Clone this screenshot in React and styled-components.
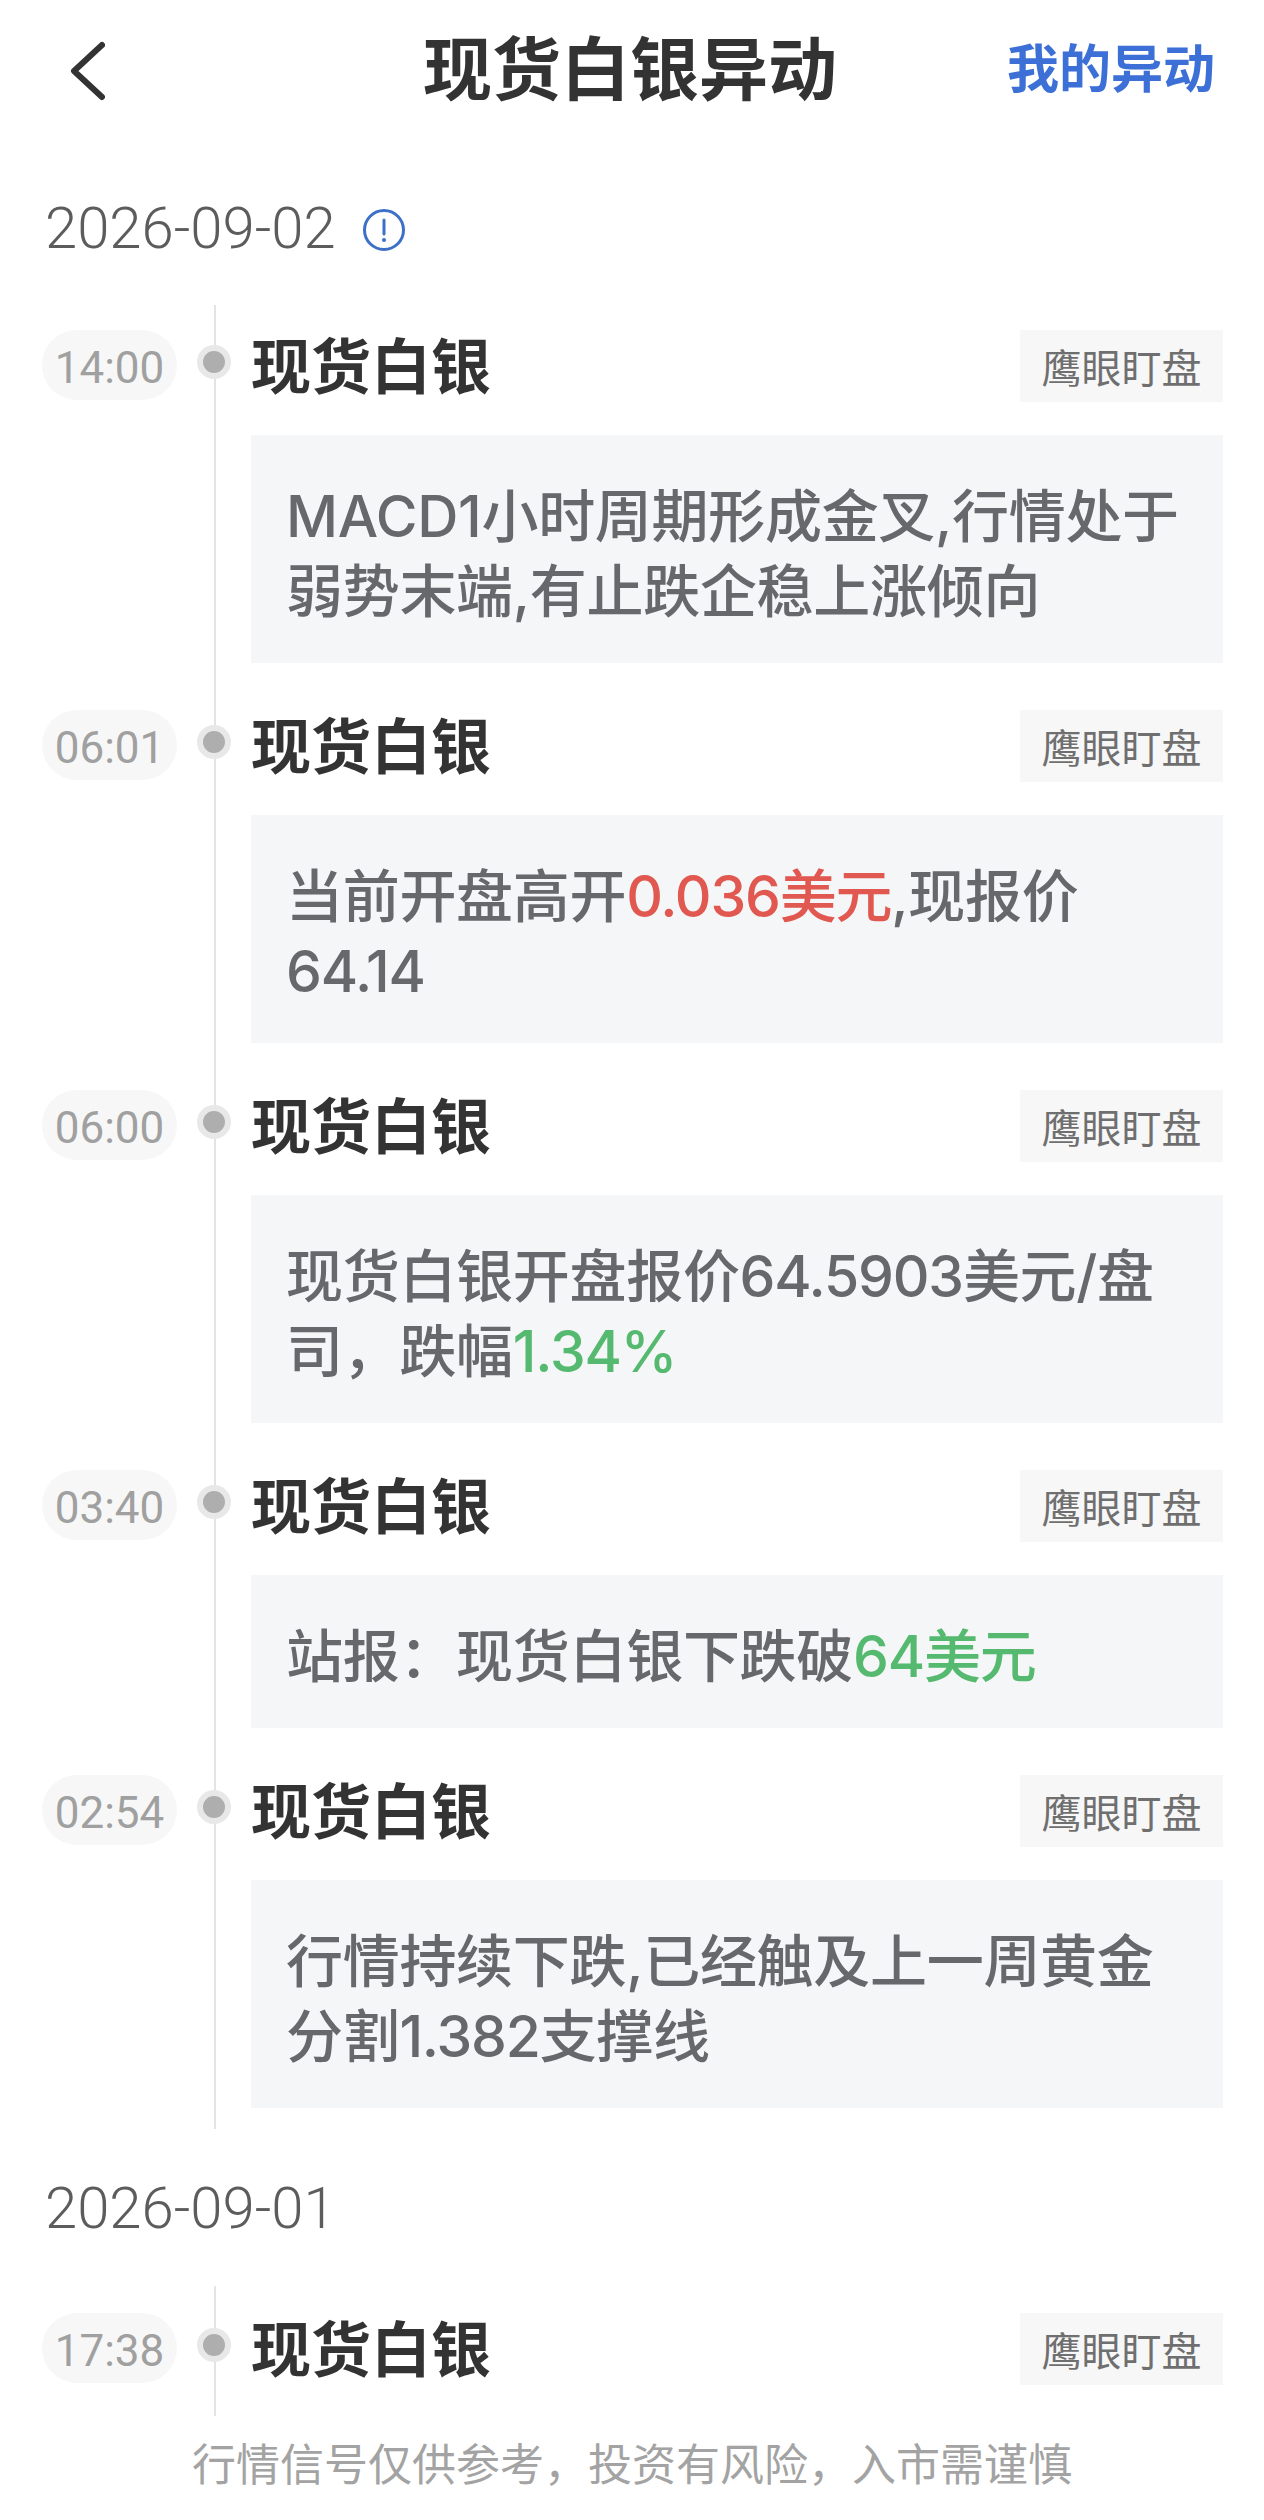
import React from 'react'
import styled, { createGlobalStyle } from 'styled-components'

const GlobalStyle = createGlobalStyle`
  html, body {
    margin: 0;
    padding: 0;
    background: #fff;
  }
  * {
    box-sizing: border-box;
  }
`

const Page = styled.div`
  width: 1264px;
  height: 2520px;
  overflow: hidden;
  display: flex;
  flex-direction: column;
  font-family: "Liberation Sans", "Noto Sans CJK SC", sans-serif;
  background: #fff;
`

const Header = styled.header`
  height: 150px;
  padding: 0 49px 8px 45px;
  display: grid;
  grid-template-columns: 1fr auto 1fr;
  align-items: center;
`

const BackIcon = styled.svg`
  width: 36px;
  height: 60px;
  margin-left: 24px;
  display: block;
`

const Title = styled.h1`
  margin: 0;
  font-size: 69px;
  font-weight: 700;
  color: #333;
  line-height: 1;
`

const MyLink = styled.a`
  justify-self: end;
  font-size: 52px;
  font-weight: 700;
  color: #3d70d6;
  line-height: 1;
  margin-top: -2px;
`

const DateRow = styled.div`
  height: ${(p) => (p.$first ? '155px' : '157px')};
  padding: 1px 0 0 45px;
  display: flex;
  align-items: center;
  gap: 26px;
  flex: none;
`

const DateText = styled.div`
  font-family: Roboto, sans-serif;
  font-size: 58px;
  font-weight: 300;
  color: #5c5c5c;
  line-height: 1;
`

const InfoIcon = styled.svg`
  width: 44px;
  height: 44px;
  margin-top: 4px;
  display: block;
`

const Timeline = styled.div`
  position: relative;
  flex: none;
  padding: ${(p) => p.$pad};
  display: flex;
  flex-direction: column;
  gap: 47px;

  &::before {
    content: "";
    position: absolute;
    left: 214px;
    top: 0;
    bottom: 0;
    width: 2px;
    background: #e4e4e4;
  }
`

const Row = styled.div`
  display: grid;
  grid-template-columns: 135px 74px 1fr;
  padding: 0 41px 0 42px;
`

const TimePill = styled.div`
  height: 70px;
  padding-top: 5px;
  border-radius: 35px;
  background: #f7f7f7;
  color: #a0a0a0;
  font-family: Roboto, sans-serif;
  font-size: 44px;
  display: flex;
  align-items: center;
  justify-content: center;
  align-self: start;
`

const Axis = styled.div`
  display: flex;
  justify-content: center;
  align-items: flex-start;
  padding-top: 15px;
`

const Dot = styled.span`
  position: relative;
  width: 34px;
  height: 34px;
  border-radius: 50%;
  background: #aeaeae;
  border: 6px solid #e8e8e8;
`

const ItemHead = styled.div`
  height: 72px;
  display: flex;
  align-items: center;
  justify-content: space-between;
`

const ItemName = styled.div`
  padding-top: 6px;
  font-size: 60px;
  font-weight: 700;
  color: #333;
  line-height: 1;
`

const Tag = styled.div`
  width: 203px;
  height: 72px;
  background: #f7f7f7;
  color: #6f6f6f;
  font-size: 40px;
  display: flex;
  align-items: center;
  justify-content: center;
`

const Card = styled.div`
  margin-top: 33px;
  padding: 44px 35px 34px;
  background: #f5f6f8;
  color: #66686b;
  font-family: Inter, "Noto Sans CJK SC", sans-serif;
  font-size: 57px;
  font-weight: 500;
  letter-spacing: -0.3px;
  line-height: 75px;
`

const Num = styled.span`
  letter-spacing: -1.2px;
`

const Up = styled(Num)`
  color: #e0584f;
`

const Down = styled(Num)`
  color: #55b96f;
`

const Footer = styled.footer`
  flex: 1;
  display: flex;
  align-items: center;
  justify-content: center;
  padding-bottom: 12px;
  color: #a3a3a3;
  font-size: 44px;
  background: #fff;
`

const items = [
  { time: '14:00', text: 'MACD1小时周期形成金叉,行情处于弱势末端,有止跌企稳上涨倾向' },
  { time: '06:01', text: <>当前开盘高开<Up>0.036美元</Up>,现报价<Num>64.14</Num></> },
  { time: '06:00', text: <>现货白银开盘报价<Num>64.5903</Num>美元/盘司，跌幅<Down>1.34%</Down></> },
  { time: '03:40', text: <>站报：现货白银下跌破<Down>64美元</Down></> },
  { time: '02:54', text: <>行情持续下跌,已经触及上一周黄金分割<Num>1.382</Num>支撑线</> },
]

const Item = ({ time, text }) => (
  <Row>
    <TimePill>{time}</TimePill>
    <Axis><Dot /></Axis>
    <div>
      <ItemHead>
        <ItemName>现货白银</ItemName>
        <Tag>鹰眼盯盘</Tag>
      </ItemHead>
      {text && <Card>{text}</Card>}
    </div>
  </Row>
)

const App = () => (
  <Page>
    <GlobalStyle />
    <Header>
      <BackIcon viewBox="0 0 36 60" fill="none">
        <path d="M33 4 L5 30 L33 56" stroke="#333" strokeWidth="6" strokeLinecap="round" strokeLinejoin="round" />
      </BackIcon>
      <Title>现货白银异动</Title>
      <MyLink>我的异动</MyLink>
    </Header>
    <DateRow $first>
      <DateText>2026-09-02</DateText>
      <InfoIcon viewBox="0 0 44 44" fill="none">
        <circle cx="22" cy="22" r="19.5" stroke="#3d70c6" strokeWidth="3" />
        <path d="M22 12 V26" stroke="#3d70c6" strokeWidth="3" strokeLinecap="round" />
        <circle cx="22" cy="32" r="2" fill="#3d70c6" />
      </InfoIcon>
    </DateRow>
    <Timeline $pad="25px 0 21px">
      {items.map((item) => <Item key={item.time} {...item} />)}
    </Timeline>
    <DateRow>
      <DateText>2026-09-01</DateText>
    </DateRow>
    <Timeline $pad="27px 0 31px">
      <Item time="17:38" />
    </Timeline>
    <Footer>行情信号仅供参考，投资有风险，入市需谨慎</Footer>
  </Page>
)

export default App
